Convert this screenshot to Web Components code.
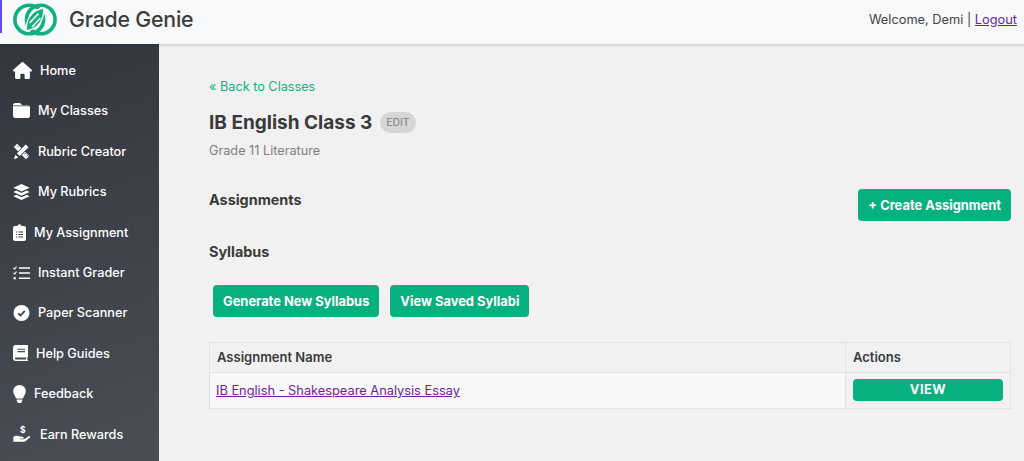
<!DOCTYPE html>
<html lang="en">
<head>
<meta charset="UTF-8">
<title>Grade Genie</title>
<style>
  html, body { margin: 0; height: 100%; overflow: hidden; }
  body { font-family: Inter, "Liberation Sans", sans-serif; background: #f1f1f1; }
</style>
</head>
<body>
<gg-app>
  <gg-header slot="header"></gg-header>
  <gg-sidebar slot="sidebar">
    <gg-nav-item icon="home" label="Home"></gg-nav-item>
    <gg-nav-item icon="folder" label="My Classes"></gg-nav-item>
    <gg-nav-item icon="ruler" label="Rubric Creator"></gg-nav-item>
    <gg-nav-item icon="layers" label="My Rubrics"></gg-nav-item>
    <gg-nav-item icon="clipboard" label="My Assignment"></gg-nav-item>
    <gg-nav-item icon="tasks" label="Instant Grader"></gg-nav-item>
    <gg-nav-item icon="check" label="Paper Scanner"></gg-nav-item>
    <gg-nav-item icon="book" label="Help Guides"></gg-nav-item>
    <gg-nav-item icon="bulb" label="Feedback"></gg-nav-item>
    <gg-nav-item icon="hand" label="Earn Rewards"></gg-nav-item>
  </gg-sidebar>
  <gg-class-page slot="main"></gg-class-page>
</gg-app>

<script>
// App frame: header on top, sidebar and page below
class GgApp extends HTMLElement {
  constructor() {
    super();
    this.attachShadow({ mode: 'open' }).innerHTML = `
      <style>
        :host { display: grid; grid-template: 44px 1fr / 159px 1fr; height: 461px; width: 1024px; }
        .top { grid-column: 1 / 3; position: relative; z-index: 1; }
      </style>
      <div class="top"><slot name="header"></slot></div>
      <slot name="sidebar"></slot>
      <slot name="main"></slot>`;
  }
}

class GgHeader extends HTMLElement {
  constructor() {
    super();
    this.attachShadow({ mode: 'open' }).innerHTML = `
      <style>
        :host { display: flex; align-items: center; justify-content: space-between; height: 44px; box-sizing: border-box;
          background: #f8f9fb; box-shadow: 0 1px 3px rgba(0,0,0,.18); padding: 0 7px 6px 13px; position: relative; }
        .mark { position: absolute; left: 0; top: 0; width: 1.5px; height: 33px; background: #5b4de6; }
        .brand { display: flex; align-items: center; gap: 12px; font-size: 21.300px; font-weight: 500; color: #3c3c3c; letter-spacing: -.2px; }
        svg { display: block; }
        .user { font-size: 12.800px; color: #444; }
        a { color: #6f1ea0; }
      </style>
      <span class="mark"></span>
      <div class="brand">
        <svg width="44" height="33" viewBox="0 0 44 33" fill="none" stroke="#10b07f" stroke-width="3.600">
          <circle cx="16.200" cy="16.500" r="14.300"/>
          <circle cx="27.800" cy="16.500" r="14.300"/>
          <path d="M30.500 5C31.500 14 27.500 25.500 13.500 28 12.500 19 16.500 7.500 30.500 5z" fill="#10b07f" stroke="#f8f9fb" stroke-width="1.300"/>
          <path d="M25.500 10.500 16.500 20M27.500 15 19 24" stroke="#f8f9fb" stroke-width="1.700"/>
        </svg>
        <span>Grade Genie</span>
      </div>
      <div class="user">Welcome, Demi | <a href="#">Logout</a></div>`;
  }
}

class GgSidebar extends HTMLElement {
  constructor() {
    super();
    this.attachShadow({ mode: 'open' }).innerHTML = `
      <style>
        :host { display: flex; flex-direction: column; padding-top: 6.400px; box-sizing: border-box; height: 417px;
          background: linear-gradient(160deg, #33363f, #4a4e56); }
      </style>
      <slot></slot>`;
  }
}

const ICONS = {
  home: [19, 17, '0 0 576 512', '<path d="M575.800 255.500c0 18-15 32.100-32 32.100h-32l.7 160.200c0 2.700-.2 5.400-.5 8.100V472c0 22.100-17.900 40-40 40H456c-1.100 0-2.200 0-3.300-.1c-1.400 .1-2.800 .1-4.200 .1H392c-22.100 0-40-17.900-40-40V384c0-17.700-14.300-32-32-32H256c-17.700 0-32 14.300-32 32v88c0 22.100-17.900 40-40 40H128.100c-1.500 0-3-.1-4.500-.2c-1.200 .1-2.400 .2-3.600 .2H104c-22.100 0-40-17.900-40-40V360c0-.9 0-1.900 .1-2.800V287.600H32c-18 0-32-14-32-32.100c0-9 3-17 10-24L266.400 8c7-7 15-8 22-8s15 2 21 7L564.800 231.500c8 7 12 15 11 24z"/>'],
  folder: [17, 15, '0 0 512 448', '<path d="M64 448H448c35.300 0 64-28.700 64-64V128c0-35.300-28.700-64-64-64H288c-10 0-20-5-26-13L243 26C231 10 212 0 192 0H64C29 0 0 29 0 64V384c0 35 29 64 64 64z"/><path d="M0 82H512" stroke="#383b44" stroke-width="22"/>'],
  ruler: [17, 17, '0 0 24 24', '<path d="M3.500 3.500 20.500 20.500" stroke="#fff" stroke-width="6.500" fill="none"/><path d="M20 4 7 17" stroke="#393c45" stroke-width="7.500" fill="none"/><path d="M20 4 7.500 16.500" stroke="#fff" stroke-width="5.500" fill="none"/><path d="M3.500 16.500 7.500 20.500 1 23z"/><path d="M6 6 8 4M16 16l2-2M19 19l2-2" stroke="#393c45" stroke-width="1.200" fill="none"/>'],
  layers: [17, 16, '0 0 24 22.600', '<path d="M12 0 23.500 5.300 12 10.600.5 5.300z"/><path d="M4.700 9.300.5 11.300 12 16.600 23.500 11.300l-4.200-2L12 12.700z"/><path d="M4.700 15.300.5 17.300 12 22.600 23.500 17.300l-4.200-2L12 18.700z"/>'],
  clipboard: [13, 17, '0 0 13 17', '<path d="M2 2h2.300a2.300 2.300 0 0 1 4.400 0H11a2 2 0 0 1 2 2v11a2 2 0 0 1-2 2H2a2 2 0 0 1-2-2V4a2 2 0 0 1 2-2z"/><path d="M3 8h1.300M3 10.500h1.300M3 13h1.300M5.500 8h4.500M5.500 10.500h4.500M5.500 13h4.500" stroke="#3c3f48" stroke-width="1.100" fill="none"/>'],
  tasks: [17, 14, '0 0 17 14', '<path d="M.5 2 1.600 3 3.500.6M.5 7 1.600 8 3.500 5.600" stroke="#fff" stroke-width="1.100" fill="none"/><circle cx="1.700" cy="12.300" r="1.200"/><path d="M6 2h11M6 7h11M6 12.300h11" stroke="#fff" stroke-width="1.500" fill="none"/>'],
  check: [17, 16, '0 0 16 16', '<circle cx="8" cy="8" r="8"/><path d="M4.700 8.300 7 10.500 11.300 5.900" stroke="#3f424b" stroke-width="1.800" fill="none"/>'],
  book: [15, 16, '0 0 15 16', '<path d="M3 0h12v11.500c0 .5-.3.800-.7 1v2.200c.4.200.7.500.7.800v.5H3a3 3 0 0 1-3-3V3a3 3 0 0 1 3-3z"/><path d="M4.500 4.300h7.500M4.500 6.600h7.500" stroke="#43464f" stroke-width="1.100" fill="none"/><path d="M3 14.500c-1.600 0-1.600-2 0-2h10v2z" fill="#43464f"/>'],
  bulb: [13, 18, '0 0 13 18', '<path d="M6.500 0a6.300 6.300 0 0 1 6.300 6.300c0 3-2.200 4.400-2.800 7.200H3c-.6-2.800-2.800-4.200-2.800-7.200A6.300 6.300 0 0 1 6.500 0z"/><path d="M3.800 14.500h5.400v1l-1 2.500H4.800l-1-2.500z"/>'],
  hand: [19, 18, '0 0 19 18', '<path d="M.3 12.200c1-1.100 2.300-1.500 3.500-1.500 1.800 0 3.300 1 5 1 1.300 0 1.800.4 1.800 1s-.5 1-1.400 1H6.500v.5h3.800c1 0 2-.4 2.800-1.100l2.400-1.900c.7-.5 1.500-.1 1.600.5.100.4-.1.800-.5 1.100l-3.500 3c-.7.600-1.500.9-2.400.9H.3z"/><text x="7" y="8" font-size="8.500" font-weight="700" font-family="Inter, sans-serif" fill="#fff">$</text>']
};

class GgNavItem extends HTMLElement {
  connectedCallback() {
    const [w, h, box, body] = ICONS[this.getAttribute('icon')];
    this.shadowRoot || this.attachShadow({ mode: 'open' });
    this.shadowRoot.innerHTML = `
      <style>
        :host { display: flex; align-items: center; gap: 8px; height: 40.400px; padding-left: 13px; color: #fff; font-size: 12.700px; font-weight: 500; }
        svg { display: block; flex: none; fill: #fff; }
      </style>
      <svg width="${w}" height="${h}" viewBox="${box}">${body}</svg>
      <span>${this.getAttribute('label')}</span>`;
  }
}

class GgButton extends HTMLElement {
  constructor() {
    super();
    this.attachShadow({ mode: 'open' }).innerHTML = `
      <style>
        :host { display: inline-flex; align-items: center; justify-content: center; height: 32px; padding: 0 10px;
          background: #06b07f; color: #fff; border-radius: 4px; font-size: 12.900px; font-weight: 700; box-sizing: border-box; white-space: nowrap; }
        :host([wide]) { display: flex; height: 22px; letter-spacing: .5px; }
      </style>
      <slot></slot>`;
  }
}

class GgTable extends HTMLElement {
  constructor() {
    super();
    this.attachShadow({ mode: 'open' }).innerHTML = `
      <style>
        :host { display: grid; grid-template-columns: 637px 165px; width: 802px; font-size: 13px; color: #3a3a3a; }
        .cell { border: 1px solid #e2e2e2; box-sizing: border-box; padding: 0 7px; display: flex; align-items: center; margin-bottom: -1px; }
        .last { margin-left: -1px; }
        .head { height: 31px; padding-bottom: 2px; font-weight: 600; background: #f1f1f1; }
        .row { height: 37px; background: #f7f8fa; }
        .act { background: #f1f1f1; padding-bottom: 2px; }
        a { color: #6f1ea0; font-size: 12.800px; margin-left: -1px; }
        gg-button { flex: 1; }
      </style>
      <div class="cell head">Assignment Name</div>
      <div class="cell head last">Actions</div>
      <div class="cell row"><a href="#">IB English - Shakespeare Analysis Essay</a></div>
      <div class="cell row act last"><gg-button wide>VIEW</gg-button></div>`;
  }
}

class GgClassPage extends HTMLElement {
  constructor() {
    super();
    this.attachShadow({ mode: 'open' }).innerHTML = `
      <style>
        :host { display: block; padding: 35px 13px 0 50px; color: #3a3a3a; }
        .back { display: block; color: #0bb583; font-size: 12.700px; text-decoration: none; line-height: 16px; }
        .title { display: flex; align-items: center; gap: 8px; margin-top: 15px; height: 24px; }
        h1 { margin: 0; font-size: 19px; font-weight: 700; }
        .edit { background: #d6d6d6; color: #8c8c8c; font-size: 10.300px; font-weight: 500; border-radius: 11px; padding: 0 6px; height: 21px; display: flex; align-items: center; }
        .sub { color: #808080; font-size: 12.700px; margin-top: 9px; line-height: 16px; }
        .split { display: flex; justify-content: space-between; align-items: flex-start; margin-top: 30px; }
        h2 { margin: 0; font-size: 14.400px; font-weight: 700; line-height: 18px; }
        .split h2 { margin-top: 2px; }
        .syllabus { margin-top: 22px; }
        .actions { display: flex; gap: 11px; margin: 24px 0 25px 4px; }
      </style>
      <a class="back" href="#">« Back to Classes</a>
      <div class="title"><h1>IB English Class 3</h1><span class="edit">EDIT</span></div>
      <div class="sub">Grade 11 Literature</div>
      <div class="split"><h2>Assignments</h2><gg-button>+ Create Assignment</gg-button></div>
      <h2 class="syllabus">Syllabus</h2>
      <div class="actions"><gg-button>Generate New Syllabus</gg-button><gg-button>View Saved Syllabi</gg-button></div>
      <gg-table></gg-table>`;
  }
}

customElements.define('gg-app', GgApp);
customElements.define('gg-header', GgHeader);
customElements.define('gg-sidebar', GgSidebar);
customElements.define('gg-nav-item', GgNavItem);
customElements.define('gg-button', GgButton);
customElements.define('gg-table', GgTable);
customElements.define('gg-class-page', GgClassPage);
</script>
</body>
</html>
